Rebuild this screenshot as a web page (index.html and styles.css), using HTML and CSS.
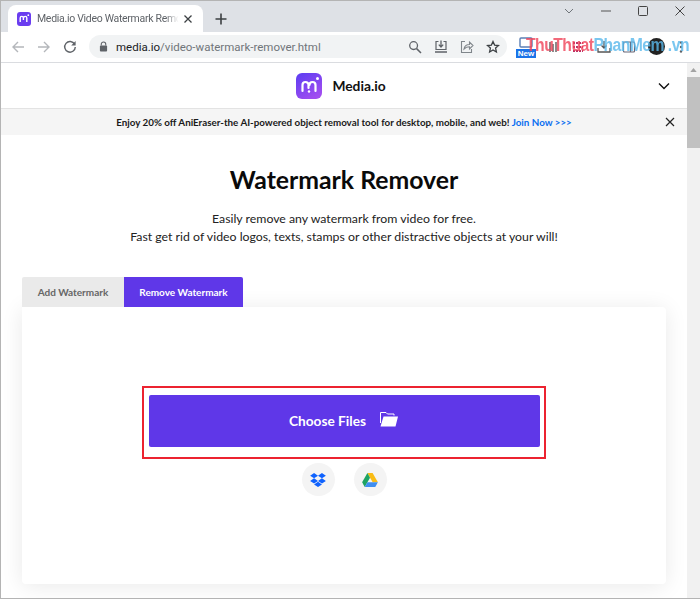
FILE: index.html
```html
<!DOCTYPE html>
<html lang="en">
<head>
<meta charset="utf-8">
<title>Media.io Video Watermark Remover</title>
<link rel="stylesheet" href="styles.css">
</head>
<body>
<div class="window">
  <div class="tabstrip">
    <div class="tab">
      <svg class="favicon" viewBox="0 0 14 14"><rect width="14" height="14" rx="3" fill="#6a3df0"/><path d="M3.2 10V6a1.6 1.6 0 0 1 3.2 0v2M6.6 6a1.6 1.6 0 0 1 3.2 0v4" fill="none" stroke="#fff" stroke-width="1.4"/><circle cx="11.3" cy="3.2" r=".9" fill="#fff"/></svg>
      <span class="tab-title">Media.io Video Watermark Remo</span>
      <svg class="tab-close" viewBox="0 0 10 10"><path d="M1.5 1.5l7 7M8.5 1.5l-7 7" stroke="#3c4043" stroke-width="1.3"/></svg>
    </div>
    <svg class="new-tab" viewBox="0 0 12 12"><path d="M6 .5v11M.5 6h11" stroke="#3c4043" stroke-width="1.6"/></svg>
    <div class="win-controls">
      <svg viewBox="0 0 12 12"><path d="M2 4l4 4 4-4" fill="none" stroke="#70757a" stroke-width="1"/></svg>
      <svg viewBox="0 0 12 12"><path d="M1 6h10" stroke="#555" stroke-width="1"/></svg>
      <svg viewBox="0 0 12 12"><rect x="1.5" y="1.5" width="9" height="9" rx="1" fill="none" stroke="#444" stroke-width="1"/></svg>
      <svg viewBox="0 0 12 12"><path d="M1.5 1.5l9 9M10.5 1.5l-9 9" stroke="#444" stroke-width="1"/></svg>
    </div>
  </div>
  <div class="toolbar">
    <svg class="nav" viewBox="0 0 14 14"><path d="M13 7H2M7 2L2 7l5 5" fill="none" stroke="#b4b7bb" stroke-width="1.4"/></svg>
    <svg class="nav" viewBox="0 0 14 14"><path d="M1 7h11M7 2l5 5-5 5" fill="none" stroke="#b4b7bb" stroke-width="1.4"/></svg>
    <svg class="nav" viewBox="0 0 14 14"><path d="M11.6 4.2A5.3 5.3 0 1 0 12.3 7" fill="none" stroke="#5f6368" stroke-width="1.4"/><path d="M12.6 1v4.4H8.2z" fill="#5f6368"/></svg>
    <div class="omnibox">
      <svg class="lock" viewBox="0 0 10 12"><path d="M2.5 5V3.5a2.5 2.5 0 0 1 5 0V5" fill="none" stroke="#5f6368" stroke-width="1.2"/><rect x="1" y="5" width="8" height="6.5" rx="1" fill="#5f6368"/></svg>
      <span class="url"><span class="url-host">media.io</span>/video-watermark-remover.html</span>
      <div class="omni-icons">
        <svg viewBox="0 0 14 14"><circle cx="5.6" cy="5.6" r="3.9" fill="none" stroke="#5f6368" stroke-width="1.3"/><path d="M8.6 8.6l4.4 4.4" stroke="#5f6368" stroke-width="1.5"/></svg>
        <svg viewBox="0 0 14 14"><path d="M4.5 1.5H2v8h10v-8H9.500" fill="none" stroke="#5f6368" stroke-width="1.200"/><path d="M7 .5v6M4.800 4.600L7 7l2.200-2.400M1 12h12" fill="none" stroke="#5f6368" stroke-width="1.300"/></svg>
        <svg viewBox="0 0 14 14"><path d="M5 1.500H1.500v11h10V9" fill="none" stroke="#80868b" stroke-width="1.100"/><path d="M4 9c.5-3 3-4.500 5.500-4.500V2L13 5.500 9.500 9V6.800C7.500 6.800 5.500 7.500 4 9z" fill="none" stroke="#80868b" stroke-width="1.100"/></svg>
        <svg viewBox="0 0 14 14"><path d="M7 1.500l1.600 3.600 3.900.4-2.900 2.600.8 3.900L7 10l-3.400 2 .8-3.900L1.500 5.500l3.900-.4z" fill="none" stroke="#3c4043" stroke-width="1.300"/></svg>
      </div>
    </div>
    <div class="extensions">
      <div class="ext-new">
        <svg viewBox="0 0 14 12"><rect x="1" y="1" width="12" height="9" rx="1" fill="none" stroke="#5b7fb5" stroke-width="1.400"/></svg>
        <span class="new-badge">New</span>
      </div>
      <svg viewBox="0 0 14 14"><path d="M4 2v10M7 4v8M10 2v10" stroke="#666" stroke-width="1.500"/></svg>
      <svg viewBox="0 0 14 14"><path d="M2 3h10M2 7h10M2 11h10" stroke="#b36" stroke-width="1.800" stroke-dasharray="2 1"/></svg>
      <svg viewBox="0 0 14 14"><path d="M7 1v7M4.500 5.500L7 8l2.500-2.500M1 8v4h12V8" fill="none" stroke="#555" stroke-width="1.300"/></svg>
      <svg viewBox="0 0 14 14"><rect x="1.500" y="2" width="11" height="10" rx="1" fill="none" stroke="#667" stroke-width="1.200"/><path d="M8.500 2v10" stroke="#667" stroke-width="1.200"/></svg>
      <span class="avatar"></span>
      <svg class="kebab" viewBox="0 0 4 14"><circle cx="2" cy="2.500" r="1.200" fill="#5f6368"/><circle cx="2" cy="7" r="1.200" fill="#5f6368"/><circle cx="2" cy="11.500" r="1.200" fill="#5f6368"/></svg>
    </div>
    <div class="watermark"><span class="wm-red">ThuThuat</span><span class="wm-blue">PhanMem .vn</span></div>
  </div>
  <div class="viewport">
    <div class="page">
      <header class="site-header">
        <div class="brand">
          <svg class="logo" viewBox="0 0 26 26">
            <defs><linearGradient id="lg" x1="0" y1="0" x2="0.600" y2="1"><stop offset="0" stop-color="#5b3df2"/><stop offset="1" stop-color="#a04df0"/></linearGradient></defs>
            <rect width="26" height="26" rx="6" fill="url(#lg)"/>
            <path d="M6.500 18v-6a3 3 0 0 1 6 0v3M13.500 12a3 3 0 0 1 6 0v6" fill="none" stroke="#fff" stroke-width="2.200" stroke-linecap="round"/>
            <circle cx="13" cy="18.500" r="1.200" fill="#fff"/><circle cx="21.500" cy="5.500" r="1.500" fill="#fff"/>
          </svg>
          <span class="brand-name">Media.io</span>
        </div>
        <svg class="header-chevron" viewBox="0 0 12 8"><path d="M1 1.500l5 5 5-5" fill="none" stroke="#111" stroke-width="1.400"/></svg>
      </header>
      <div class="promo">
        <p class="promo-text">Enjoy 20% off AniEraser-the AI-powered object removal tool for desktop, mobile, and web! <a class="promo-link">Join Now &gt;&gt;&gt;</a></p>
        <svg class="promo-close" viewBox="0 0 10 10"><path d="M1 1l8 8M9 1L1 9" stroke="#222" stroke-width="1.200"/></svg>
      </div>
      <main class="main">
        <h1 class="title">Watermark Remover</h1>
        <p class="subtitle">Easily remove any watermark from video for free.<br>Fast get rid of video logos, texts, stamps or other distractive objects at your will!</p>
        <div class="tabs">
          <div class="mode mode-off">Add Watermark</div>
          <div class="mode mode-on">Remove Watermark</div>
        </div>
        <section class="card">
          <div class="highlight">
            <button class="choose">Choose Files
              <svg class="folder" viewBox="0 0 18 16"><path d="M.5 12V1.500h5.500L7.500 3H14v1.500" fill="none" stroke="#fff" stroke-width="1"/><path d="M3.500 5.500H18L15.500 15.500H.5z" fill="#fff"/></svg>
            </button>
          </div>
          <div class="sources">
            <span class="source">
              <svg viewBox="0 0 18 16"><path d="M4.500 0L0 3l4.500 3L9 3zM13.500 0L9 3l4.500 3L18 3zM0 9l4.500 3L9 9 4.500 6zM18 9l-4.500 3L9 9l4.500-3zM4.500 13L9 16l4.500-3L9 10z" fill="#0f62fe"/></svg>
            </span>
            <span class="source">
              <svg viewBox="0 0 18 16"><path d="M6 0h6l6 10.500h-6z" fill="#f9bc15"/><path d="M6 0L0 10.500 3 16l6-10.500z" fill="#1ea362"/><path d="M3 16h12l3-5.500H6z" fill="#3f8ef0"/></svg>
            </span>
          </div>
        </section>
      </main>
    </div>
    <div class="scrollbar">
      <svg class="scroll-up" viewBox="0 0 8 5"><path d="M4 0l4 5H0z" fill="#a3a3a3"/></svg>
      <div class="thumb"></div>
    </div>
  </div>
</div>
</body>
</html>
```
FILE: styles.css
```css
* { box-sizing: border-box; }
html, body { margin: 0; padding: 0; }
body { width: 700px; height: 599px; overflow: hidden; background: #fff; font-family: Lato, "Liberation Sans", sans-serif; }
svg { display: block; flex: none; }
.window { width: 700px; height: 599px; display: flex; flex-direction: column; border: 1px solid #b4b4b4; border-right: 0; overflow: hidden; }

.tabstrip { height: 31px; flex: none; background: #dee1e6; display: flex; align-items: flex-end; padding-left: 7px; }
.tab { width: 195px; height: 27px; background: #fff; border-radius: 8px 8px 0 0; display: flex; align-items: center; padding: 0 9px; }
.favicon { width: 14px; height: 14px; }
.tab-title { margin-left: 6px; width: 143px; overflow: hidden; white-space: nowrap; font: 10.500px/16px Roboto, sans-serif; letter-spacing: -.3px; color: #5f6368; -webkit-mask-image: linear-gradient(90deg, #000 90%, transparent 99%); mask-image: linear-gradient(90deg, #000 90%, transparent 99%); }
.tab-close { width: 10px; height: 10px; margin-left: 3px; }
.new-tab { width: 12px; height: 12px; margin: 0 0 7px 12px; }
.win-controls { margin-left: auto; align-self: flex-start; display: flex; gap: 25px; padding: 4px 14px 0 0; }
.win-controls svg { width: 12px; height: 12px; }

.toolbar { position: relative; height: 31px; flex: none; background: #fff; border-bottom: 1px solid #dadce0; display: flex; align-items: center; padding: 0 0 1px 10px; }
.nav { width: 14px; height: 14px; margin-right: 12px; }
.omnibox { width: 418px; height: 23px; background: #f1f3f4; border-radius: 12px; display: flex; align-items: center; padding: 0 7px 0 10px; }
.lock { width: 9px; height: 11px; }
.url { margin-left: 8px; font: 11.500px/16px Roboto, sans-serif; color: #70757a; white-space: nowrap; }
.url-host { color: #202124; }
.omni-icons { margin-left: auto; display: flex; gap: 12px; }
.omni-icons svg { width: 14px; height: 14px; }
.extensions { display: flex; align-items: center; gap: 11.500px; margin-left: 9px; }
.extensions svg { width: 14px; height: 14px; }
.ext-new { position: relative; width: 20px; height: 22px; margin-right: -2px; }
.ext-new svg { margin: 0 0 0 3px; }
.new-badge { position: absolute; left: 0; top: 13px; width: 20px; height: 9px; background: #1a73e8; color: #fff; font: 700 8px/9px "Liberation Sans", sans-serif; text-align: center; }
.avatar { width: 17px; height: 17px; border-radius: 50%; background: #222; }
.extensions .kebab { width: 4px; height: 14px; margin-left: 3px; }
.watermark { position: absolute; left: 525px; top: 1px; font: 700 17.500px/24px "Liberation Sans", sans-serif; white-space: nowrap; letter-spacing: -.6px; opacity: .8; transform: scaleX(.9); transform-origin: left center; }
.wm-red { color: #f0445a; }
.wm-blue { color: #5ab9ec; }

.viewport { flex: 1; min-height: 0; display: flex; }
.page { flex: 1; min-width: 0; display: flex; flex-direction: column; }
.scrollbar { width: 13px; flex: none; background: #f1f1f1; display: flex; flex-direction: column; align-items: center; padding-top: 5px; }
.scroll-up { width: 7px; height: 4px; }
.thumb { width: 100%; height: 71px; margin-top: 5px; background: #c1c1c1; }

.site-header { position: relative; height: 45px; flex: none; display: flex; align-items: center; justify-content: center; padding-right: 6px; }
.brand { display: flex; align-items: center; gap: 10px; }
.logo { width: 26px; height: 26px; }
.brand-name { font: 700 13.800px/20px Lato, sans-serif; color: #111; }
.header-chevron { position: absolute; right: 17px; top: 19px; width: 12px; height: 8px; }
.promo { position: relative; height: 27px; flex: none; background: #f5f5f5; border-top: 1px solid #e3e3e3; display: flex; align-items: center; justify-content: center; }
.promo-text { margin: 0; font: 700 9.800px/14px Lato, sans-serif; color: #1a1a1a; white-space: nowrap; }
.promo-link { color: #0a6ff0; }
.promo-close { position: absolute; right: 12px; top: 8px; width: 10px; height: 10px; }

.main { flex: 1; min-height: 0; padding: 28px 21px 14px; display: flex; flex-direction: column; background: #fff; }
.title { margin: 0; text-align: center; font: 700 24.800px/34px Lato, sans-serif; color: #0a0a0a; }
.subtitle { margin: 13px 0 0; text-align: center; font: 400 12.300px/18px Lato, sans-serif; color: #222; }
.tabs { position: relative; z-index: 1; display: flex; margin-top: 31px; height: 30px; flex: none; }
.mode { height: 30px; display: flex; align-items: center; justify-content: center; font: 700 10px/14px Lato, sans-serif; }
.mode-off { width: 102px; background: #eaeaea; color: #666; border-radius: 2px 0 0 0; }
.mode-on { width: 119px; background: #5f37e8; color: #fff; border-radius: 0 2px 0 0; }
.card { flex: 1; min-height: 0; background: #fff; border-radius: 0 4px 4px 4px; display: flex; flex-direction: column; align-items: center; padding-top: 79px; box-shadow: 0 2px 22px rgba(0, 0, 0, .09); }
.highlight { width: 404px; height: 73px; flex: none; border: 2px solid #ec2330; padding: 7px 5px 0; }
.choose { width: 391px; height: 52px; display: flex; align-items: center; justify-content: center; gap: 14px; border: 0; border-radius: 2px; background: #5f37e8; color: #fff; font: 700 13.700px/20px Lato, sans-serif; padding: 0 2px 0 0; }
.folder { width: 18px; height: 16px; margin-top: -4px; }
.sources { display: flex; gap: 19px; margin-top: 4px; }
.source { width: 33px; height: 33px; border-radius: 50%; background: #f4f4f4; display: flex; align-items: center; justify-content: center; }
.source svg { width: 16px; height: 14px; }
```
